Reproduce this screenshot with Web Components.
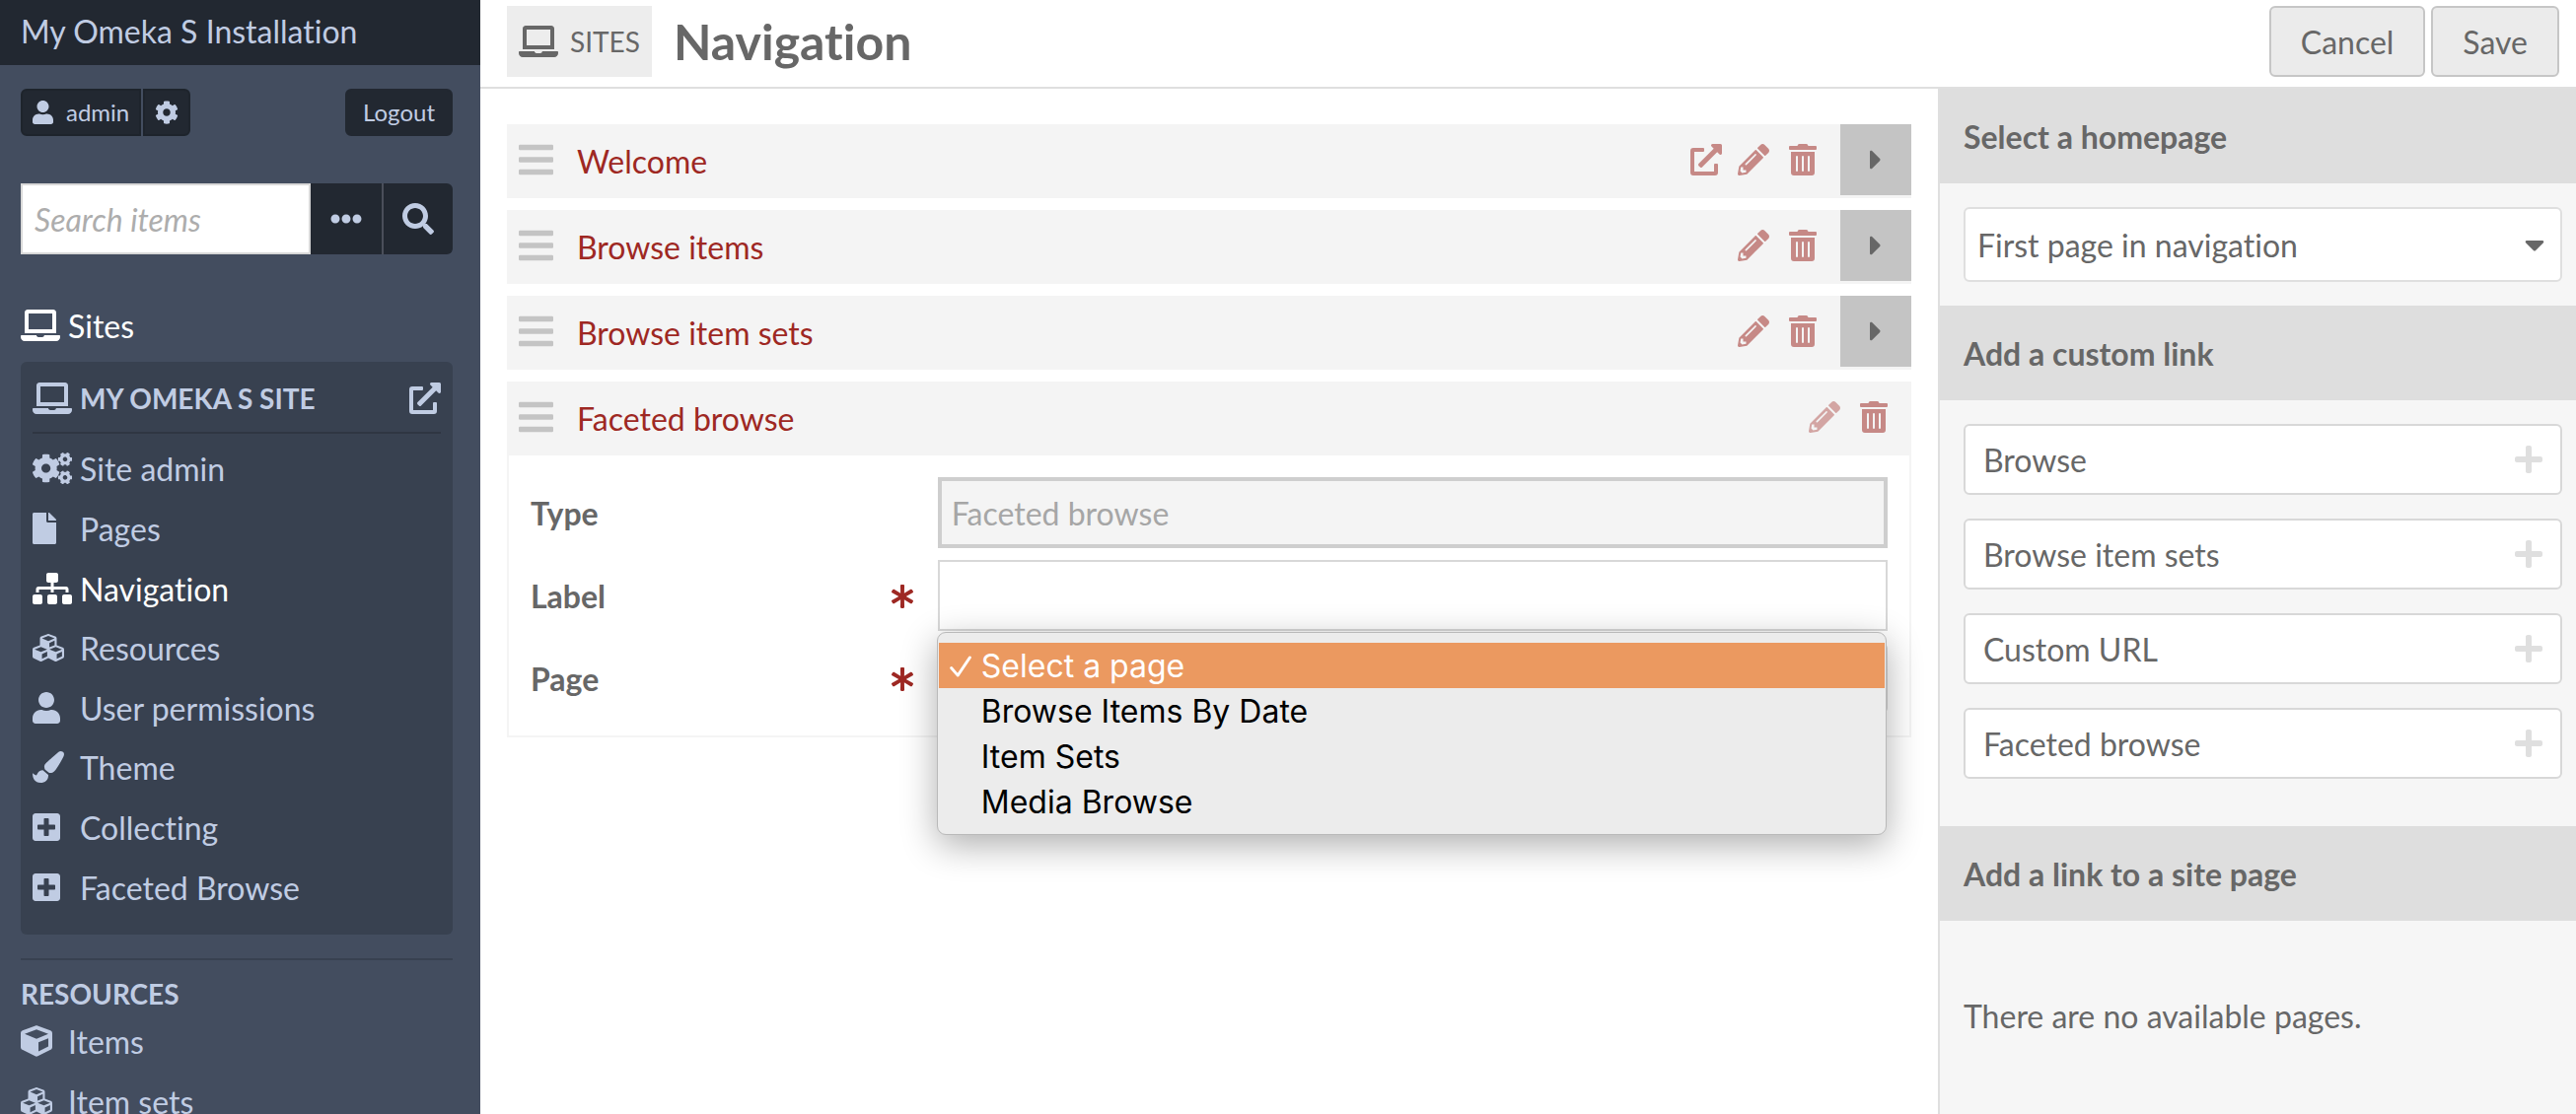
<!DOCTYPE html>
<html lang="en">
<head>
<meta charset="utf-8">
<title>Navigation · My Omeka S Installation</title>
<style>
  html, body { margin: 0; height: 100%; }
  body { font-family: Lato, "Open Sans", sans-serif; font-size: 32px; line-height: 48px; font-variant-ligatures: none; color: #676767; background: #fff; overflow: hidden; }
</style>
</head>
<body>
<omeka-admin>
  <admin-sidebar slot="sidebar"></admin-sidebar>
  <page-header slot="header"></page-header>
  <nav-tree slot="content">
    <nav-entry label="Welcome" viewable></nav-entry>
    <nav-entry label="Browse items"></nav-entry>
    <nav-entry label="Browse item sets"></nav-entry>
    <nav-entry label="Faceted browse" editing><link-form></link-form></nav-entry>
  </nav-tree>
  <link-panel slot="panel"></link-panel>
</omeka-admin>

<script>
const ICONS = {
  laptop: [640, '<path d="M624 416H381.54c-.74 19.81-14.71 32-32.74 32H288c-18.69 0-33.02-17.47-32.77-32H16c-8.8 0-16 7.2-16 16v16c0 35.2 28.8 64 64 64h512c35.2 0 64-28.8 64-64v-16c0-8.8-7.2-16-16-16zM576 48c0-26.4-21.6-48-48-48H112C85.6 0 64 21.6 64 48v336h512V48zm-64 272H128V64h384v256z"/>'],
  user: [448, '<path d="M224 256c70.7 0 128-57.3 128-128S294.7 0 224 0 96 57.3 96 128s57.3 128 128 128zm89.6 32h-16.7c-22.2 10.2-46.9 16-72.9 16s-50.6-5.8-72.9-16h-16.7C60.2 288 0 348.2 0 422.4V464c0 26.5 21.5 48 48 48h352c26.5 0 48-21.5 48-48v-41.6c0-74.2-60.2-134.4-134.4-134.4z"/>'],
  cog: [512, '<path d="M487.4 315.7l-42.6-24.6c4.3-23.2 4.3-47 0-70.2l42.6-24.6c4.9-2.8 7.1-8.6 5.5-14-11.1-35.6-30-67.8-54.7-94.6-3.8-4.1-10-5.1-14.8-2.3L380.8 110c-17.9-15.4-38.5-27.3-60.8-35.1V25.8c0-5.6-3.9-10.5-9.4-11.7-36.7-8.2-74.3-7.8-109.2 0-5.5 1.2-9.4 6.1-9.4 11.7V75c-22.2 7.9-42.8 19.8-60.8 35.1L88.7 85.5c-4.9-2.8-11-1.9-14.8 2.3-24.7 26.7-43.6 58.9-54.7 94.6-1.7 5.4.6 11.2 5.5 14L67.3 221c-4.3 23.2-4.3 47 0 70.2l-42.6 24.6c-4.9 2.8-7.1 8.6-5.5 14 11.1 35.6 30 67.8 54.7 94.6 3.8 4.1 10 5.1 14.8 2.3l42.6-24.6c17.9 15.4 38.5 27.3 60.8 35.1v49.2c0 5.6 3.9 10.5 9.4 11.7 36.7 8.2 74.3 7.8 109.2 0 5.5-1.2 9.4-6.1 9.4-11.7v-49.2c22.2-7.9 42.8-19.8 60.8-35.1l42.6 24.6c4.9 2.8 11 1.9 14.8-2.3 24.7-26.7 43.6-58.9 54.7-94.6 1.5-5.5-.7-11.3-5.6-14.1zM256 336c-44.1 0-80-35.9-80-80s35.9-80 80-80 80 35.9 80 80-35.9 80-80 80z"/>'],
  file: [384, '<path d="M224 136V0H24C10.7 0 0 10.7 0 24v464c0 13.3 10.7 24 24 24h336c13.3 0 24-10.7 24-24V160H248c-13.2 0-24-10.8-24-24zm160-14.1v6.1H256V0h6.1c6.4 0 12.5 2.5 17 7l97.9 98c4.5 4.5 7 10.6 7 16.9z"/>'],
  sitemap: [640, '<path d="M128 352H32c-17.67 0-32 14.33-32 32v96c0 17.67 14.33 32 32 32h96c17.67 0 32-14.33 32-32v-96c0-17.67-14.33-32-32-32zm-24-80h192v48h48v-48h192v48h48v-57.59c0-21.17-17.23-38.41-38.41-38.41H344v-64h40c17.67 0 32-14.33 32-32V32c0-17.67-14.33-32-32-32H256c-17.67 0-32 14.33-32 32v96c0 17.67 14.33 32 32 32h40v64H94.41C73.23 224 56 241.23 56 262.41V320h48v-48zm264 80h-96c-17.67 0-32 14.33-32 32v96c0 17.67 14.33 32 32 32h96c17.67 0 32-14.33 32-32v-96c0-17.67-14.33-32-32-32zm240 0h-96c-17.67 0-32 14.33-32 32v96c0 17.67 14.33 32 32 32h96c17.67 0 32-14.33 32-32v-96c0-17.67-14.33-32-32-32z"/>'],
  cubes: [512, '<path d="M488.6 250.2L392 214V105.5c0-15-9.3-28.4-23.4-33.7l-100-37.5c-8.1-3.1-17.1-3.1-25.3 0l-100 37.5c-14.1 5.3-23.4 18.7-23.4 33.7V214l-96.6 36.2C9.3 255.5 0 268.9 0 283.9V394c0 13.6 7.7 26.1 19.9 32.2l100 50c10.1 5.1 22.1 5.1 32.2 0l103.9-52 103.9 52c10.1 5.1 22.1 5.1 32.2 0l100-50c12.2-6.1 19.9-18.6 19.9-32.2V283.9c0-15-9.3-28.4-23.4-33.7zM358 214.8l-85 31.9v-68.2l85-37v73.3zM154 104.1l102-38.2 102 38.2v.6l-102 41.4-102-41.4v-.6zm84 291.1l-85 42.5v-79.1l85-38.8v75.4zm0-112l-102 41.4-102-41.4v-.6l102-38.2 102 38.2v.6zm240 112l-85 42.5v-79.1l85-38.8v75.4zm0-112l-102 41.4-102-41.4v-.6l102-38.2 102 38.2v.6z"/>'],
  cube: [512, '<path d="M239.1 6.3l-208 78c-18.7 7-31.1 25-31.1 45v225.1c0 18.2 10.3 34.8 26.5 42.9l208 104c13.5 6.8 29.4 6.8 42.9 0l208-104c16.3-8.1 26.5-24.8 26.5-42.9V129.3c0-20-12.4-37.9-31.1-44.9l-208-78C262 2.2 250 2.2 239.1 6.3zM256 68.4l192 72v1.1l-192 78-192-78v-1.1l192-72zm32 356V275.5l160-65v133.9l-160 80z"/>'],
  brush: [512, '<path d="M167.02 309.34c-40.12 2.58-76.53 17.86-97.19 72.3-2.35 6.21-8 9.98-14.59 9.98-11.11 0-45.46-27.67-55.25-34.35C0 439.62 37.93 512 128 512c75.86 0 128-43.77 128-120.19 0-3.11-.65-6.08-.97-9.13l-88.01-73.34zM457.89 0c-15.16 0-29.37 6.71-40.21 16.45C213.27 199.05 192 203.34 192 257.09c0 13.7 3.25 26.76 8.73 38.7l63.82 53.18c7.21 1.8 14.64 3.03 22.39 3.03 62.11 0 98.11-45.47 211.16-256.46 7.38-14.35 13.9-29.85 13.9-45.99C512 20.64 486 0 457.89 0z"/>'],
  plusSquare: [448, '<path d="M400 32H48C21.5 32 0 53.5 0 80v352c0 26.5 21.5 48 48 48h352c26.5 0 48-21.5 48-48V80c0-26.5-21.5-48-48-48zm-32 252c0 6.6-5.4 12-12 12h-92v92c0 6.6-5.4 12-12 12h-56c-6.6 0-12-5.4-12-12v-92H92c-6.6 0-12-5.4-12-12v-56c0-6.6 5.4-12 12-12h92v-92c0-6.6 5.4-12 12-12h56c6.6 0 12 5.4 12 12v92h92c6.6 0 12 5.4 12 12v56z"/>'],
  search: [512, '<path d="M505 442.7L405.3 343c-4.5-4.5-10.6-7-17-7H372c27.6-35.3 44-79.7 44-128C416 93.1 322.9 0 208 0S0 93.1 0 208s93.1 208 208 208c48.3 0 92.7-16.4 128-44v16.3c0 6.4 2.5 12.5 7 17l99.7 99.7c9.4 9.4 24.6 9.4 33.9 0l28.3-28.3c9.4-9.4 9.4-24.6.1-34zM208 336c-70.7 0-128-57.2-128-128 0-70.7 57.2-128 128-128 70.7 0 128 57.2 128 128 0 70.7-57.2 128-128 128z"/>'],
  dots: [512, '<path d="M328 256c0 39.8-32.2 72-72 72s-72-32.2-72-72 32.2-72 72-72 72 32.2 72 72zm104-72c-39.8 0-72 32.2-72 72s32.2 72 72 72 72-32.2 72-72-32.2-72-72-72zm-352 0c-39.8 0-72 32.2-72 72s32.2 72 72 72 72-32.2 72-72-32.2-72-72-72z"/>'],
  external: [512, '<path d="M432,320H400a16,16,0,0,0-16,16V448H64V128H208a16,16,0,0,0,16-16V80a16,16,0,0,0-16-16H48A48,48,0,0,0,0,112V464a48,48,0,0,0,48,48H400a48,48,0,0,0,48-48V336A16,16,0,0,0,432,320ZM488,0h-128c-21.37,0-32.05,25.91-17,41l35.73,35.73L135,320.37a24,24,0,0,0,0,34L157.67,377a24,24,0,0,0,34,0L435.28,133.32,471,169c15,15,41,4.5,41-17V24A24,24,0,0,0,488,0Z"/>'],
  pencil: [512, '<path d="M497.9 142.1l-46.1 46.1c-4.7 4.7-12.3 4.7-17 0l-111-111c-4.7-4.7-4.7-12.3 0-17l46.1-46.1c18.7-18.7 49.1-18.7 67.9 0l60.1 60.1c18.8 18.7 18.8 49.1 0 67.9zM284.2 99.8L21.6 362.4.4 483.9c-2.9 16.4 11.4 30.6 27.8 27.8l121.5-21.3 262.6-262.6c4.7-4.7 4.7-12.3 0-17l-111-111c-4.8-4.7-12.4-4.7-17.1 0zM124.1 339.9c-5.5-5.5-5.5-14.3 0-19.8l154-154c5.5-5.5 14.3-5.5 19.8 0s5.5 14.3 0 19.8l-154 154c-5.5 5.5-14.3 5.5-19.8 0zM88 424h48v36.3l-64.5 11.3-31.1-31.1L51.7 376H88v48z"/>'],
  trash: [448, '<path d="M32 464a48 48 0 0 0 48 48h288a48 48 0 0 0 48-48V128H32zm272-256a16 16 0 0 1 32 0v224a16 16 0 0 1-32 0zm-96 0a16 16 0 0 1 32 0v224a16 16 0 0 1-32 0zm-96 0a16 16 0 0 1 32 0v224a16 16 0 0 1-32 0zM432 32H312l-9.4-18.7A24 24 0 0 0 281.1 0H166.8a23.72 23.72 0 0 0-21.4 13.3L136 32H16A16 16 0 0 0 0 48v32a16 16 0 0 0 16 16h416a16 16 0 0 0 16-16V48a16 16 0 0 0-16-16z"/>'],
  caretRight: [192, '<path d="M0 384.662V127.338c0-17.818 21.543-26.741 34.142-14.142l128.662 128.662c7.81 7.81 7.81 20.474 0 28.284L34.142 398.804C21.543 411.404 0 402.48 0 384.662z"/>'],
  caretDown: [320, '<path d="M31.3 192h257.3c17.8 0 26.7 21.5 14.1 34.1L174.1 354.8c-7.8 7.8-20.5 7.8-28.3 0L17.2 226.1C4.6 213.5 13.5 192 31.3 192z"/>'],
  plus: [448, '<path d="M416 208H272V64c0-17.67-14.33-32-32-32h-32c-17.67 0-32 14.33-32 32v144H32c-17.67 0-32 14.33-32 32v32c0 17.67 14.33 32 32 32h144v144c0 17.67 14.33 32 32 32h32c17.67 0 32-14.33 32-32V304h144c17.67 0 32-14.33 32-32v-32c0-17.67-14.33-32-32-32z"/>'],
  asterisk: [512, '<path d="M478.21 334.093L336 256l142.21-78.093c11.795-6.477 15.961-21.384 9.232-33.037l-19.48-33.741c-6.728-11.653-21.72-15.499-33.227-8.523L296 186.718l3.475-162.204C299.763 11.061 288.937 0 275.48 0h-38.96c-13.456 0-24.283 11.061-23.994 24.514L216 186.718 77.265 102.607c-11.506-6.976-26.499-3.13-33.227 8.523l-19.48 33.741c-6.728 11.653-2.562 26.56 9.233 33.037L176 256 33.79 334.093c-11.795 6.477-15.961 21.384-9.232 33.037l19.48 33.741c6.728 11.653 21.721 15.499 33.227 8.523L216 325.282l-3.475 162.204C212.237 500.939 223.064 512 236.52 512h38.961c13.456 0 24.283-11.061 23.995-24.514L296 325.282l138.735 84.111c11.506 6.976 26.499 3.13 33.227-8.523l19.48-33.741c6.728-11.653 2.563-26.559-9.232-33.036z"/>'],
  bars: [448, '<rect y="60" width="448" height="72" rx="16"/><rect y="220" width="448" height="72" rx="16"/><rect y="380" width="448" height="72" rx="16"/>'],
  check: [512, '<path d="M38 290L190 468L476 44" fill="none" stroke="currentColor" stroke-width="66" stroke-linecap="round" stroke-linejoin="round"/>']
};
// Two small cogs, turned by 30 degrees, sit to the right of a large one.
const cogBody = ICONS.cog[1];
ICONS.cogs = [640,
  `<g transform="translate(218 256) scale(.92) translate(-256 -256)">${cogBody}</g>` +
  `<g transform="translate(528 110) rotate(30) scale(.46) translate(-256 -256)">${cogBody}</g>` +
  `<g transform="translate(528 406) rotate(30) scale(.46) translate(-256 -256)">${cogBody}</g>`];

class BaseElement extends HTMLElement {
  connectedCallback() {
    if (this.shadowRoot) return;
    this.attachShadow({ mode: 'open' }).innerHTML = this.template();
  }
}
const define = (name, cls) => customElements.define(name, cls);

const RESET = `*{box-sizing:border-box} a{color:inherit;text-decoration:none}
  button,input,select{font:inherit;color:inherit;margin:0;padding:0;border:0;border-radius:0;background:none}
  h1,h2,h3,ul,p{margin:0;padding:0;font-size:inherit} ul{list-style:none}`;

define('ui-icon', class extends BaseElement {
  template() {
    const [w, body] = ICONS[this.getAttribute('name')];
    return `<style>:host{display:block;flex:none;height:var(--icon-size,32px)}svg{display:block;height:100%;width:auto;fill:currentColor}</style>
      <svg viewBox="0 0 ${w} 512" aria-hidden="true">${body}</svg>`;
  }
});

define('omeka-admin', class extends BaseElement {
  template() {
    return `<style>
      :host{display:grid;grid-template-columns:487px minmax(0,1fr) 647px;grid-template-rows:90px minmax(0,1fr);height:100vh}
      ::slotted([slot=sidebar]){grid-row:1 / span 2}
      ::slotted([slot=header]){grid-column:2 / span 2}
    </style><slot name="sidebar"></slot><slot name="header"></slot><slot name="content"></slot><slot name="panel"></slot>`;
  }
});

define('side-link', class extends BaseElement {
  template() {
    return `<style>${RESET}
      :host{display:flex;flex:1 1 60px;align-items:stretch}
      a{display:flex;align-items:center;flex:1}
      .icon{flex:none;width:48px}
      .text{padding-top:2px}
      :host([active]){color:#fff}
    </style><a href="#"><span class="icon"><ui-icon name="${this.getAttribute('icon')}"></ui-icon></span><span class="text"><slot></slot></span></a>`;
  }
});

define('admin-sidebar', class extends BaseElement {
  template() {
    return `<style>${RESET}
      :host{display:block;background:#434d5f;color:#c0cce3;overflow:hidden}
      .brand{display:block;background:#222831;height:66px;padding:8px 21px 0}
      .body{padding:24px 28px 0 21px}
      .account{display:flex;gap:2px;font-size:24px;line-height:44px;--icon-size:24px}
      .account a{display:flex;align-items:center;gap:13px;height:48px;padding:0 10px;background:#222831;border:2px solid #1e242c}
      .account .user{border-radius:6px 0 0 6px}
      .account .settings{border-radius:0 6px 6px 0}
      .account .logout{margin-left:auto;padding:0 16px;border-color:#222831;border-radius:6px}
      form{display:flex;height:72px;margin-top:48px}
      form input{flex:1;min-width:0;background:#fff;border:2px solid #d8d8d8;padding:2px 12px 0;color:#676767}
      form input::placeholder{color:#adadad;font-style:italic;opacity:1}
      form button{display:grid;place-items:center;width:72px;background:#222831}
      form button + button{border-left:2px solid #4a4f5a;border-radius:0 6px 6px 0}
      .sites{height:60px;margin-top:42px}
      .site{margin-top:7px;padding:0 12px 18px;background:#384150;border-radius:6px}
      .site header{display:flex;align-items:center;justify-content:space-between;height:73px;padding-top:2px;border-bottom:2px solid #2f3642}
      .site h2{display:flex;align-items:center;font-size:28px;text-transform:uppercase}
      .site h2 span{width:48px}
      .site nav{display:flex;flex-direction:column;height:485px;margin-top:5px}
      .resources{margin-top:24px;padding-top:17px;border-top:2px solid #384150}
      .resources h3{font-size:28px;line-height:34px;text-transform:uppercase}
      .resources side-link{height:61px}
    </style>
    <a class="brand" href="#">My Omeka S Installation</a>
    <div class="body">
      <div class="account">
        <a class="user" href="#"><ui-icon name="user"></ui-icon>admin</a>
        <a class="settings" href="#" aria-label="User settings"><ui-icon name="cog"></ui-icon></a>
        <a class="logout" href="#">Logout</a>
      </div>
      <form role="search">
        <input type="text" placeholder="Search items" aria-label="Search items">
        <button type="button" aria-label="Search options"><ui-icon name="dots"></ui-icon></button>
        <button type="submit" aria-label="Search"><ui-icon name="search"></ui-icon></button>
      </form>
      <side-link class="sites" icon="laptop" active>Sites</side-link>
      <section class="site">
        <header><h2><span><ui-icon name="laptop"></ui-icon></span>My Omeka S Site</h2>
          <a href="#" aria-label="View site"><ui-icon name="external"></ui-icon></a></header>
        <nav>
          <side-link icon="cogs">Site admin</side-link>
          <side-link icon="file">Pages</side-link>
          <side-link icon="sitemap" active>Navigation</side-link>
          <side-link icon="cubes">Resources</side-link>
          <side-link icon="user">User permissions</side-link>
          <side-link icon="brush">Theme</side-link>
          <side-link icon="plusSquare">Collecting</side-link>
          <side-link icon="plusSquare">Faceted Browse</side-link>
        </nav>
      </section>
      <section class="resources">
        <h3>Resources</h3>
        <side-link icon="cube">Items</side-link>
        <side-link icon="cubes">Item sets</side-link>
      </section>
    </div>`;
  }
});

define('page-header', class extends BaseElement {
  template() {
    return `<style>${RESET}
      :host{display:flex;align-items:flex-start;box-sizing:border-box;padding:6px 17px 0 27px;border-bottom:2px solid #dfdfdf;background:#fff}
      .crumb{display:flex;align-items:center;gap:12px;height:72px;padding:0 12px;background:#ededed;font-size:28px;text-transform:uppercase}
      h1{flex:1;margin-left:22px;font-size:50px;line-height:72px}
      .actions{display:flex;gap:6px}
      button{height:72px;padding:2px 30px 0;background:#ebebeb;border:2px solid #c6c6c6;border-radius:6px}
    </style>
    <a class="crumb" href="#"><ui-icon name="laptop"></ui-icon>Sites</a>
    <h1>Navigation</h1>
    <div class="actions"><button type="button">Cancel</button><button type="submit">Save</button></div>`;
  }
});

define('nav-tree', class extends BaseElement {
  template() {
    return `<style>:host{display:flex;flex-direction:column;gap:12px;padding:36px 27px}</style><slot></slot>`;
  }
});

define('nav-entry', class extends BaseElement {
  template() {
    const editing = this.hasAttribute('editing');
    return `<style>${RESET}
      :host{display:block}
      .row{display:flex;align-items:flex-start;height:75px;padding-left:12px;background:#f4f4f4;color:#9e2823}
      .row > *{height:72px}
      .handle{display:flex;align-items:center;color:#c4c4c4;--icon-size:40px}
      .title{flex:1;margin-left:24px;line-height:76px}
      .actions{display:flex;align-items:center;gap:16px;margin-right:24px}
      .actions a{display:flex;justify-content:flex-end;width:32px;opacity:.52}
      .actions .off{opacity:.38}
      .toggle{display:grid;place-items:center;width:72px;background:#c4c4c4;color:#676767}
    </style>
    <div class="row">
      <span class="handle"><ui-icon name="bars"></ui-icon></span>
      <a class="title" href="#">${this.getAttribute('label')}</a>
      <span class="actions">
        ${this.hasAttribute('viewable') ? '<a href="#" aria-label="View"><ui-icon name="external"></ui-icon></a>' : ''}
        <a href="#" aria-label="Edit" class="${editing ? 'off' : ''}"><ui-icon name="pencil"></ui-icon></a>
        <a href="#" aria-label="Remove"><ui-icon name="trash"></ui-icon></a>
      </span>
      ${editing ? '' : '<button class="toggle" type="button" aria-label="Expand"><ui-icon name="caretRight"></ui-icon></button>'}
    </div><slot></slot>`;
  }
});

define('page-options', class extends BaseElement {
  template() {
    return `<style>${RESET}
      :host{display:block;box-sizing:border-box;padding:10px 1px;background:#ececec;border:1px solid #b9b9b9;border-radius:9px;
        box-shadow:0 10px 36px rgba(0,0,0,.32);font-family:Inter,"Liberation Sans",sans-serif;color:#000}
      li{display:flex;align-items:center;gap:10px;height:46px;padding:2px 0 0 11px}
      li span{width:22px;--icon-size:22px}
      li[aria-selected=true]{background:#eb9960;color:#fff}
    </style>
    <ul role="listbox" aria-label="Page">
      <li role="option" aria-selected="true"><span><ui-icon name="check"></ui-icon></span>Select a page</li>
      <li role="option"><span></span>Browse Items By Date</li>
      <li role="option"><span></span>Item Sets</li>
      <li role="option"><span></span>Media Browse</li>
    </ul>`;
  }
});

define('link-form', class extends BaseElement {
  template() {
    return `<style>${RESET}
      :host{display:block}
      form{display:flex;flex-direction:column;gap:12px;padding:22px 22px 22px;border:2px solid #f4f4f4;border-top:0}
      .field{display:grid;grid-template-columns:3fr 7fr;height:72px}
      label{display:flex;align-items:center;justify-content:space-between;padding:2px 24px 0 0;font-weight:bold;--icon-size:24px}
      label ui-icon{color:#9e2823}
      .value{position:relative;display:flex}
      input,select{flex:1;min-width:0;padding:2px 12px 0;border:2px solid #d8d8d8;background:#fff;appearance:none}
      input:disabled{padding:2px 10px 0;border:4px solid #cecece;background:#f4f4f4;color:#a6a6a6}
      select{border-radius:6px}
      page-options{position:absolute;top:-11px;left:-1px;right:1px}
    </style>
    <form>
      <div class="field"><label for="type">Type</label><div class="value"><input id="type" value="Faceted browse" disabled></div></div>
      <div class="field"><label for="label">Label<ui-icon name="asterisk"></ui-icon></label><div class="value"><input id="label" type="text"></div></div>
      <div class="field"><label for="page">Page<ui-icon name="asterisk"></ui-icon></label><div class="value">
        <select id="page"><option></option></select><page-options></page-options></div></div>
    </form>`;
  }
});

define('panel-section', class extends BaseElement {
  template() {
    return `<style>${RESET}
      :host{display:block}
      h2{height:96px;padding:0 24px;line-height:98px;background:#dedede}
      .content{display:flex;flex-direction:column;gap:24px;padding:24px 14px 24px 24px}
      :host([roomy]) .content{padding-bottom:48px}
      :host([message]) .content{padding-top:73px}
    </style><h2>${this.getAttribute('heading')}</h2><div class="content"><slot></slot></div>`;
  }
});

define('add-link', class extends BaseElement {
  template() {
    return `<style>${RESET}
      :host{display:flex}
      button{display:flex;align-items:center;justify-content:space-between;flex:1;height:72px;padding:0 18px;border:2px solid #d8d8d8;border-radius:6px;background:#fff}
      .text{padding-top:2px}
      ui-icon{color:#dfdfdf}
    </style><button type="button"><span class="text"><slot></slot></span><ui-icon name="plus"></ui-icon></button>`;
  }
});

define('link-panel', class extends BaseElement {
  template() {
    return `<style>${RESET}
      :host{display:block;box-sizing:border-box;background:#f6f6f6;border-left:2px solid #dfdfdf;overflow:hidden}
      .select{position:relative;display:flex}
      select{flex:1;height:76px;padding:2px 12px 0;appearance:none;background:#fff;border:2px solid #dfdfdf;border-radius:6px}
      .select ui-icon{position:absolute;right:18px;top:22px;pointer-events:none}
    </style>
    <panel-section heading="Select a homepage">
      <div class="select"><select aria-label="Select a homepage"><option>First page in navigation</option></select><ui-icon name="caretDown"></ui-icon></div>
    </panel-section>
    <panel-section heading="Add a custom link" roomy>
      <add-link>Browse</add-link>
      <add-link>Browse item sets</add-link>
      <add-link>Custom URL</add-link>
      <add-link>Faceted browse</add-link>
    </panel-section>
    <panel-section heading="Add a link to a site page" message>
      <p>There are no available pages.</p>
    </panel-section>`;
  }
});
</script>
</body>
</html>
